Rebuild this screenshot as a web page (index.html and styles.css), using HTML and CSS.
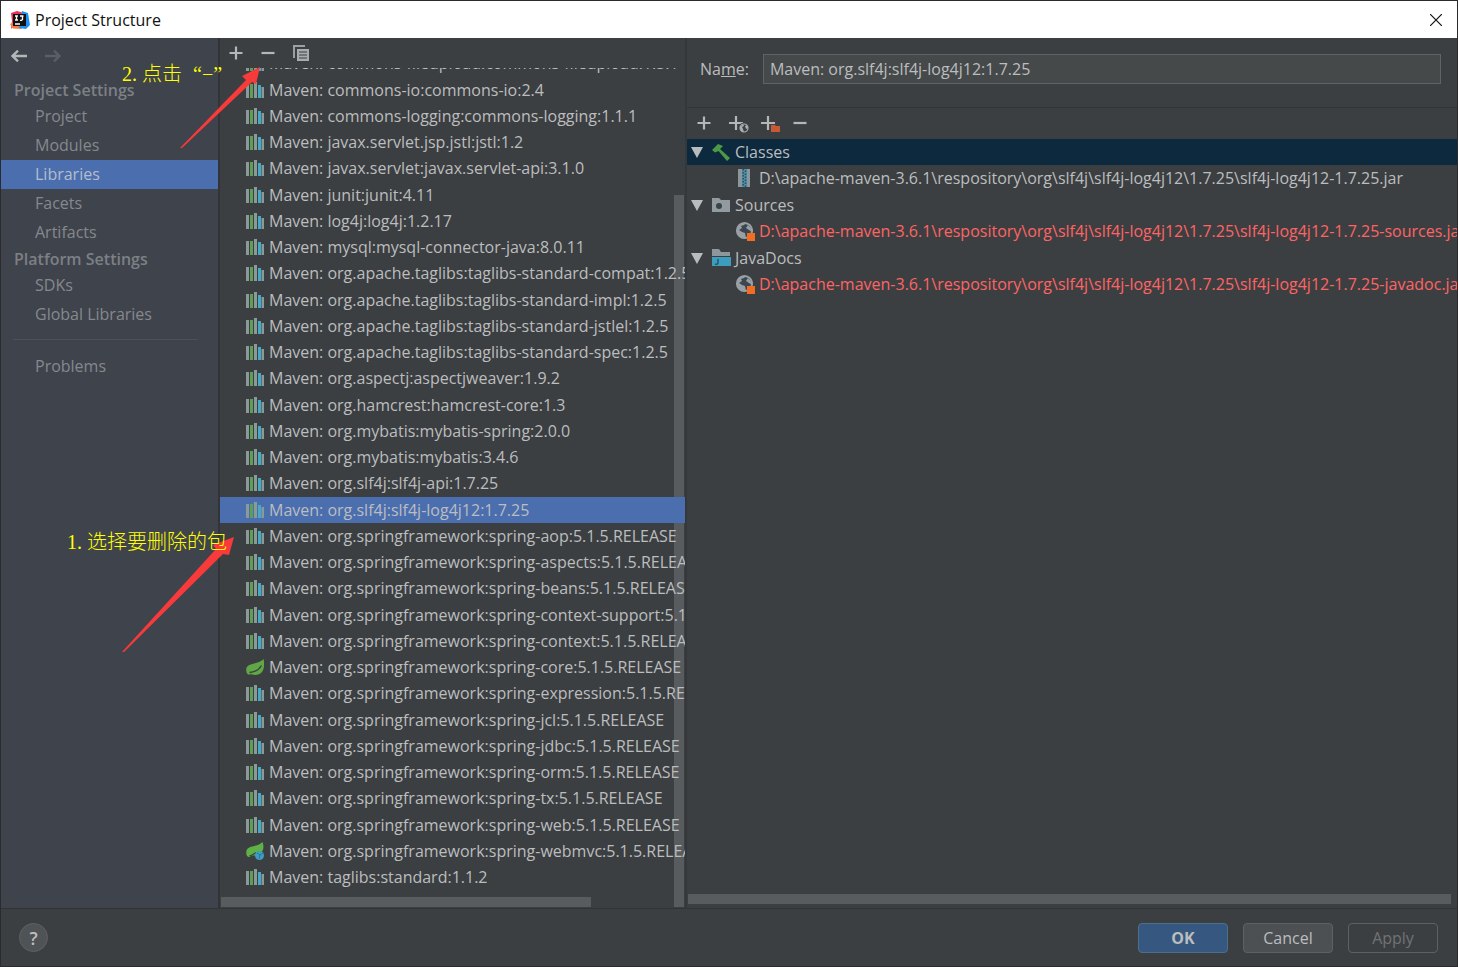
FILE: index.html
```html
<!DOCTYPE html>
<html lang="en">
<head>
<meta charset="utf-8">
<title>Project Structure</title>
<link rel="stylesheet" href="styles.css">
</head>
<body>
<svg class="sprite" aria-hidden="true">
  <symbol id="lib" viewBox="0 0 18 18">
    <path fill="#8a9a98" d="M0 3h3v14H0zM8 1h3v16H8zM15.500 6H18v11h-2.500z"/>
    <path fill="#5f9e55" d="M4 3h3v14H4z"/>
    <path fill="#45a9c9" d="M12 4h3v13h-3z"/>
  </symbol>
  <symbol id="leaf" viewBox="0 0 18 18">
    <path fill="#5fa845" d="M17.500 1C19 7 18.500 17 9 17c-3 0-3.500-1-5.500-.5C1 17 .2 14 .2 11.500.5 4 12 7 17.500 1z"/>
    <path fill="none" stroke="#3c3f41" stroke-width="1.300" d="M3.500 14.500C9 14 13 12 15.500 7.500"/>
  </symbol>
  <symbol id="leafweb" viewBox="0 0 18 18">
    <path fill="#5fb045" d="M16.500 0C18.500 5 18 12 9 13.500c-3 0-4 0-5.500 1.500C1 15 .2 13 .2 10.500.5 2.500 11 6 16.500 0z"/>
    <path fill="none" stroke="#3c3f41" stroke-width="1.300" d="M3.500 14C7 13 8 12 10 10.500"/>
    <circle cx="13.500" cy="13.500" r="4.500" fill="#3d9dc4"/>
    <path fill="none" stroke="#2f7793" d="M11 11l3 2 3-2M13 17l1-4"/>
  </symbol>
  <symbol id="plus" viewBox="0 0 14 14"><path stroke="#b4b7b9" stroke-width="2.200" d="M7 .5v13M.5 7h13"/></symbol>
  <symbol id="minus" viewBox="0 0 14 14"><path stroke="#b4b7b9" stroke-width="2.200" d="M.5 7h13"/></symbol>
  <symbol id="globe" viewBox="0 0 20 20">
    <circle cx="9.500" cy="9.500" r="7.600" fill="#3c4650" stroke="#98a0a5" stroke-width="2"/>
    <path fill="#98a0a5" d="M2 8c1-5 5-7 9-6L9 4 6 5l1 2-3 2 3 2 3 1 1 5C5 18 1 13 2 8zM11 7l2-3 5 5-1 2-3-2z"/>
    <path fill="#f26d21" d="M12 12h8v8h-8z"/>
  </symbol>
</svg>
<div class="window">
  <header class="titlebar">
    <svg class="logo" viewBox="0 0 20 20" aria-hidden="true">
      <path fill="#e8345a" d="M1 3l6-2 7 2-5 8-8 8 1-8z"/>
      <path fill="#f4793b" d="M0 14l8-4 4 9-9-.5z"/>
      <path fill="#2190ea" d="M12 1l6 2 2 12-4 4-7-1z"/>
      <path fill="#111" d="M3 4h13v12H3z"/>
      <path fill="none" stroke="#fff" stroke-width="1.300" d="M5 6h3M6.500 6v4M5 10h3M10 6h3.500M12.500 6v3.500l-1 .8H10M5 14h5"/>
    </svg>
    <h1 class="title">Project Structure</h1>
    <button class="close" aria-label="Close"><svg viewBox="0 0 12 12"><path stroke="#111" stroke-width="1.200" d="M0 0l12 12M12 0L0 12"/></svg></button>
  </header>

  <main class="body">
    <nav class="sidebar" aria-label="Settings">
      <div class="history">
        <button class="icon-btn" aria-label="Back"><svg class="arrow" viewBox="0 0 16 12"><path fill="none" stroke="#b4b7b9" stroke-width="2.400" d="M16 6H1.500M7 .7L1.500 6 7 11.300"/></svg></button>
        <button class="icon-btn" aria-label="Forward" disabled><svg class="arrow" viewBox="0 0 16 12"><path fill="none" stroke="#5a5e65" stroke-width="2.400" d="M0 6h14.500M9 .7L14.500 6 9 11.300"/></svg></button>
      </div>
      <h2 class="group">Project Settings</h2>
      <a class="nav" href="#">Project</a>
      <a class="nav" href="#">Modules</a>
      <a class="nav current" href="#" aria-current="page">Libraries</a>
      <a class="nav" href="#">Facets</a>
      <a class="nav" href="#">Artifacts</a>
      <h2 class="group">Platform Settings</h2>
      <a class="nav" href="#">SDKs</a>
      <a class="nav" href="#">Global Libraries</a>
      <hr class="rule">
      <a class="nav" href="#">Problems</a>
    </nav>

    <section class="libraries" aria-label="Libraries">
      <div class="lib-tools">
        <button class="icon-btn" aria-label="Add"><svg class="i14"><use href="#plus"/></svg></button>
        <button class="icon-btn" aria-label="Remove"><svg class="i14"><use href="#minus"/></svg></button>
        <button class="icon-btn" aria-label="Copy"><svg class="i16" viewBox="0 0 16 16"><path fill="#9da0a2" d="M0 0h12v2H2v11H0z"/><path fill="#a9acae" d="M4 4h12v12H4z"/><path stroke="#3c3f41" stroke-width="1.200" d="M6 7h8M6 10h8M6 13h8"/></svg></button>
      </div>
      <div class="lib-view">
        <ul class="lib-list">
          <li><svg class="i18"><use href="#lib"/></svg>Maven: commons-fileupload:commons-fileupload:1.3.1</li>
          <li><svg class="i18"><use href="#lib"/></svg>Maven: commons-io:commons-io:2.4</li>
          <li><svg class="i18"><use href="#lib"/></svg>Maven: commons-logging:commons-logging:1.1.1</li>
          <li><svg class="i18"><use href="#lib"/></svg>Maven: javax.servlet.jsp.jstl:jstl:1.2</li>
          <li><svg class="i18"><use href="#lib"/></svg>Maven: javax.servlet:javax.servlet-api:3.1.0</li>
          <li><svg class="i18"><use href="#lib"/></svg>Maven: junit:junit:4.11</li>
          <li><svg class="i18"><use href="#lib"/></svg>Maven: log4j:log4j:1.2.17</li>
          <li><svg class="i18"><use href="#lib"/></svg>Maven: mysql:mysql-connector-java:8.0.11</li>
          <li><svg class="i18"><use href="#lib"/></svg>Maven: org.apache.taglibs:taglibs-standard-compat:1.2.5</li>
          <li><svg class="i18"><use href="#lib"/></svg>Maven: org.apache.taglibs:taglibs-standard-impl:1.2.5</li>
          <li><svg class="i18"><use href="#lib"/></svg>Maven: org.apache.taglibs:taglibs-standard-jstlel:1.2.5</li>
          <li><svg class="i18"><use href="#lib"/></svg>Maven: org.apache.taglibs:taglibs-standard-spec:1.2.5</li>
          <li><svg class="i18"><use href="#lib"/></svg>Maven: org.aspectj:aspectjweaver:1.9.2</li>
          <li><svg class="i18"><use href="#lib"/></svg>Maven: org.hamcrest:hamcrest-core:1.3</li>
          <li><svg class="i18"><use href="#lib"/></svg>Maven: org.mybatis:mybatis-spring:2.0.0</li>
          <li><svg class="i18"><use href="#lib"/></svg>Maven: org.mybatis:mybatis:3.4.6</li>
          <li><svg class="i18"><use href="#lib"/></svg>Maven: org.slf4j:slf4j-api:1.7.25</li>
          <li class="selected"><svg class="i18"><use href="#lib"/></svg>Maven: org.slf4j:slf4j-log4j12:1.7.25</li>
          <li><svg class="i18"><use href="#lib"/></svg>Maven: org.springframework:spring-aop:5.1.5.RELEASE</li>
          <li><svg class="i18"><use href="#lib"/></svg>Maven: org.springframework:spring-aspects:5.1.5.RELEASE</li>
          <li><svg class="i18"><use href="#lib"/></svg>Maven: org.springframework:spring-beans:5.1.5.RELEASE</li>
          <li><svg class="i18"><use href="#lib"/></svg>Maven: org.springframework:spring-context-support:5.1.5.RELEASE</li>
          <li><svg class="i18"><use href="#lib"/></svg>Maven: org.springframework:spring-context:5.1.5.RELEASE</li>
          <li><svg class="i18"><use href="#leaf"/></svg>Maven: org.springframework:spring-core:5.1.5.RELEASE</li>
          <li><svg class="i18"><use href="#lib"/></svg>Maven: org.springframework:spring-expression:5.1.5.RELEASE</li>
          <li><svg class="i18"><use href="#lib"/></svg>Maven: org.springframework:spring-jcl:5.1.5.RELEASE</li>
          <li><svg class="i18"><use href="#lib"/></svg>Maven: org.springframework:spring-jdbc:5.1.5.RELEASE</li>
          <li><svg class="i18"><use href="#lib"/></svg>Maven: org.springframework:spring-orm:5.1.5.RELEASE</li>
          <li><svg class="i18"><use href="#lib"/></svg>Maven: org.springframework:spring-tx:5.1.5.RELEASE</li>
          <li><svg class="i18"><use href="#lib"/></svg>Maven: org.springframework:spring-web:5.1.5.RELEASE</li>
          <li><svg class="i18"><use href="#leafweb"/></svg>Maven: org.springframework:spring-webmvc:5.1.5.RELEASE</li>
          <li><svg class="i18"><use href="#lib"/></svg>Maven: taglibs:standard:1.1.2</li>
        </ul>
        <div class="thumb lib-v"></div>
        <div class="thumb lib-h"></div>
      </div>
    </section>

    <section class="detail" aria-label="Library details">
      <div class="name-row">
        <label for="name">Na<u>m</u>e:</label>
        <input id="name" class="name" type="text" value="Maven: org.slf4j:slf4j-log4j12:1.7.25">
      </div>
      <div class="root-tools">
        <button class="icon-btn" aria-label="Add"><svg class="i14"><use href="#plus"/></svg></button>
        <button class="icon-btn" aria-label="Specify documentation URL"><svg class="i20" viewBox="0 0 20 20"><path stroke="#b4b7b9" stroke-width="2.200" d="M7 3v14M0 10h14"/><circle cx="15" cy="15" r="5.500" fill="#3c3f41"/><circle cx="15" cy="15" r="4" fill="none" stroke="#a9b0b4" stroke-width="1.200"/><path fill="#a9b0b4" d="M11 14l3-3 1 2-2 1 1 2 1 3c-3 0-4-3-4-5zM16 13l2-1 1 3-2 1z"/></svg></button>
        <button class="icon-btn" aria-label="Exclude"><svg class="i20" viewBox="0 0 20 20"><path stroke="#b4b7b9" stroke-width="2.200" d="M7 3v14M0 10h14"/><path fill="#3c3f41" d="M9 11h11v9H9z"/><path fill="#c75a35" d="M10 12h4l1 1h4v6h-9z"/></svg></button>
        <button class="icon-btn" aria-label="Remove"><svg class="i14"><use href="#minus"/></svg></button>
      </div>
      <div class="roots">
        <div class="root">
          <div class="node picked"><svg class="tri" viewBox="0 0 12 12"><path fill="#b9bcbe" d="M0 1h12L6 12z"/></svg><svg class="i20" viewBox="0 0 20 20"><path fill="#4d9a46" d="M0 8l6-6 5 2-3 3 10 9-3 3L6.500 9 3 10.500z"/></svg>Classes</div>
          <div class="node leaf"><svg class="i18" viewBox="0 0 18 18"><path fill="#8b979e" d="M3 0h12v18H3z"/><path fill="#4b8fa8" d="M7 0h5v18H7z"/><path stroke="#2f4d5a" stroke-width="1.500" stroke-dasharray="1.500 1.500" d="M8.200 0v18"/><path stroke="#2f4d5a" stroke-width="1.500" stroke-dasharray="1.500 1.500" stroke-dashoffset="1.500" d="M10.500 0v18"/></svg>D:\apache-maven-3.6.1\respository\org\slf4j\slf4j-log4j12\1.7.25\slf4j-log4j12-1.7.25.jar</div>
        </div>
        <div class="root">
          <div class="node"><svg class="tri" viewBox="0 0 12 12"><path fill="#b9bcbe" d="M0 1h12L6 12z"/></svg><svg class="i20" viewBox="0 0 20 20"><path fill="#929b9f" d="M0 3h7l2 2h9v12H0z"/><circle cx="7" cy="11" r="3" fill="#3c4246"/></svg>Sources</div>
          <div class="node leaf missing"><svg class="i20"><use href="#globe"/></svg>D:\apache-maven-3.6.1\respository\org\slf4j\slf4j-log4j12\1.7.25\slf4j-log4j12-1.7.25-sources.jar</div>
        </div>
        <div class="root">
          <div class="node"><svg class="tri" viewBox="0 0 12 12"><path fill="#b9bcbe" d="M0 1h12L6 12z"/></svg><svg class="i20" viewBox="0 0 20 20"><path fill="#8e979b" d="M0 1h7l2 3h9v4H0z"/><path fill="#3c9dbd" d="M0 9h19v9H0z"/><path fill="none" stroke="#24566a" stroke-width="1.500" d="M6 11v4q0 1.500-3 1.300"/></svg>JavaDocs</div>
          <div class="node leaf missing"><svg class="i20"><use href="#globe"/></svg>D:\apache-maven-3.6.1\respository\org\slf4j\slf4j-log4j12\1.7.25\slf4j-log4j12-1.7.25-javadoc.jar</div>
        </div>
      </div>
      <div class="thumb root-h"></div>
    </section>
  </main>

  <footer class="footer">
    <button class="help" aria-label="Help">?</button>
    <button class="btn primary">OK</button>
    <button class="btn">Cancel</button>
    <button class="btn" disabled>Apply</button>
  </footer>

  <svg class="pointer pointer-remove" viewBox="0 0 80 82" aria-hidden="true"><path fill="#f93a3a" d="M0 81L66 13 62 9 80 0 76 17 72 15 2 81z"/></svg>
  <svg class="pointer pointer-select" viewBox="0 0 114 118" aria-hidden="true"><path fill="#f93a3a" d="M0 117L94 14 91 10 112 2 107 20 101 19 2 117z"/></svg>
  <p class="note note-remove">2. 点击<span class="quote">“</span>−<span>”</span></p>
  <p class="note note-select">1. 选择要删除的包</p>
</div>
</body>
</html>
```
FILE: styles.css
```css
* { box-sizing: border-box; }

body {
  margin: 0;
  background: #3c3f41;
  color: #bbbdbf;
  font: 16px/20px "Open Sans", "Noto Sans", sans-serif;
}

button, input { font: inherit; color: inherit; }
svg { flex: none; display: block; }

.sprite { position: absolute; width: 0; height: 0; }

.window {
  position: relative;
  display: flex;
  flex-direction: column;
  min-height: 100vh;
  border: 1px solid #2b2b2d;
}

/* Title bar */
.titlebar {
  display: flex;
  align-items: center;
  gap: 5px;
  height: 37px;
  padding: 0 15px 0 9px;
  background: #fff;
  color: #111;
}
.logo { width: 20px; height: 20px; }
.title { flex: 1; margin: 0; font-size: 16px; font-weight: 400; }
.close { padding: 0; border: 0; background: none; }
.close svg { width: 12px; height: 12px; }

.body { flex: 1; display: flex; min-width: 0; }

.icon-btn { display: flex; padding: 0; border: 0; background: none; }
.arrow { width: 16px; height: 12px; }
.i14 { width: 14px; height: 14px; }
.i16 { width: 16px; height: 16px; }
.i18 { width: 18px; height: 18px; }
.i20 { width: 20px; height: 20px; }
.tri { width: 12px; height: 12px; }

/* Settings sidebar */
.sidebar {
  flex: none;
  width: 219px;
  border-right: 2px solid #323437;
  background: #3f434c;
  color: #85898e;
}
.history { display: flex; gap: 18px; padding: 12px 10px 16px; }
.group {
  margin: 0;
  padding-left: 13px;
  font-size: 16px;
  line-height: 24px;
  font-weight: 600;
  color: #7c8085;
}
.nav {
  display: block;
  padding-left: 34px;
  line-height: 29px;
  color: inherit;
  text-decoration: none;
}
.nav.current { background: #4b6eaf; color: #b5bdcb; }
.rule { margin: 10px 20px 12px 12px; border: 0; border-top: 1px solid #4c5057; }

/* Library list */
.libraries { flex: none; display: flex; flex-direction: column; width: 465px; }
.lib-tools { display: flex; align-items: center; gap: 18px; height: 30px; padding: 0 9px; }
.lib-view { position: relative; flex: 1; overflow: hidden; }
.lib-list { margin: -18px 0 0; padding: 0 0 17px; list-style: none; }
.lib-list li {
  display: flex;
  align-items: center;
  gap: 5px;
  height: 26px;
  padding-left: 26px;
  white-space: nowrap;
}
.lib-list li:nth-child(4n + 1) { margin-bottom: 1px; }
.lib-list .selected { background: #4b6eaf; }

.thumb { background: #595c5e; }
.lib-v { position: absolute; z-index: -1; top: 127px; right: 1px; bottom: 1px; width: 10px; }
.lib-h { position: absolute; left: 1px; bottom: 1px; width: 370px; height: 10px; }

/* Library details */
.detail {
  flex: 1;
  display: flex;
  flex-direction: column;
  min-width: 0;
  border-left: 2px solid #35383a;
}
.name-row {
  display: flex;
  align-items: center;
  gap: 14px;
  height: 70px;
  padding: 0 16px 8px 13px;
  border-bottom: 1px solid #323537;
}
.name {
  flex: 1;
  min-width: 0;
  height: 30px;
  padding: 0 6px;
  border: 1px solid #606365;
  background: #45494a;
}
.root-tools { display: flex; align-items: center; gap: 16px; height: 30px; padding-left: 10px; margin-bottom: 1px; }
.root-tools .icon-btn { width: 16px; }
.roots { flex: 1; display: flex; flex-direction: column; gap: 1px; overflow: hidden; }
.node {
  display: flex;
  align-items: center;
  height: 26px;
  padding-left: 4px;
  white-space: nowrap;
}
.node .tri { margin-right: 9px; }
.node .i20 { margin-right: 3px; }
.leaf { gap: 4px; padding-left: 48px; }
.leaf .i20 { margin-right: 0; }
.leaf .i18 { margin-right: 2px; }
.picked { background: #0d293e; }
.missing { color: #ff6464; }
.root-h { height: 10px; margin: 0 6px 4px 1px; }

/* Footer */
.footer {
  display: flex;
  align-items: center;
  gap: 15px;
  height: 58px;
  padding: 0 19px 0 18px;
  border-top: 1px solid #313436;
}
.help {
  width: 29px;
  height: 29px;
  margin-right: auto;
  padding: 0;
  border: 1px solid #5e6163;
  border-radius: 50%;
  background: #4f5355;
  font-size: 18px;
  font-weight: 600;
}
.btn {
  width: 90px;
  height: 30px;
  padding: 0;
  border: 1px solid #5e6163;
  border-radius: 4px;
  background: #4c5052;
}
.btn.primary { border-color: #4c708c; background: #365880; font-weight: 700; }
.btn:disabled { background: none; color: #707375; }

/* Annotations drawn over the dialog */
.pointer { position: absolute; }
.pointer-remove { left: 179px; top: 66px; width: 80px; height: 82px; }
.pointer-select { left: 121px; top: 534px; width: 114px; height: 118px; }
.note {
  position: absolute;
  margin: 0;
  color: #ff0;
  font: 20px/24px "Liberation Serif", "Noto Sans CJK SC", serif;
  font-weight: 300;
  white-space: nowrap;
}
.note-remove { left: 121px; top: 61px; }
.note-select { left: 66px; top: 529px; }
.quote { margin-left: 11px; }
```
